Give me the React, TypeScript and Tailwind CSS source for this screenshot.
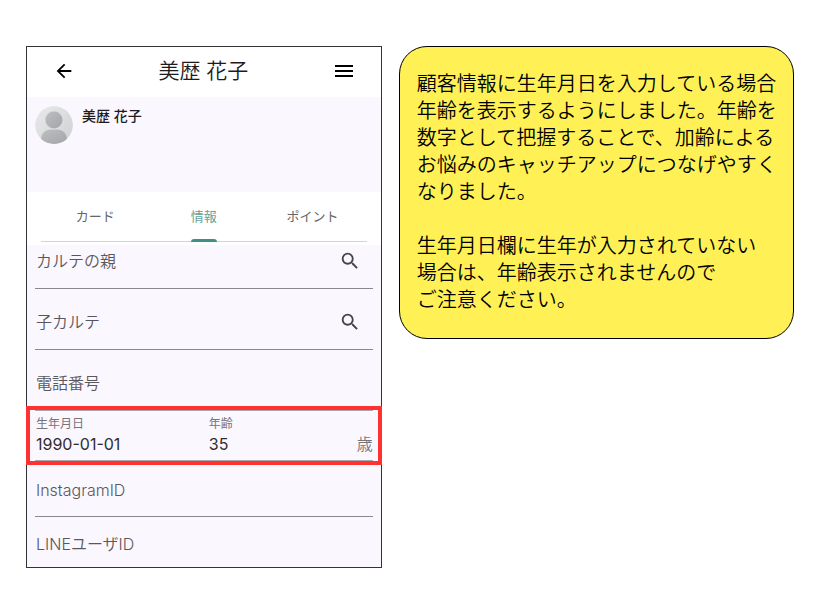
import * as React from "react"
import { useState } from "react"
import { clsx } from "clsx"
import { MdArrowBack, MdMenu, MdSearch } from "react-icons/md"

const TABS = ["カード", "情報", "ポイント"]

function Avatar() {
  return (
    <svg viewBox="0 0 38 38" className="size-[38px] shrink-0" aria-hidden="true">
      <defs>
        <clipPath id="avatar-clip">
          <circle cx="19" cy="19" r="19" />
        </clipPath>
        <linearGradient id="avatar-bg" x1="0" y1="0" x2="1" y2="1">
          <stop offset="0" stopColor="#e9eaec" />
          <stop offset="1" stopColor="#cfd0d2" />
        </linearGradient>
        <linearGradient id="avatar-fg" x1="0" y1="0" x2="1" y2="1">
          <stop offset="0" stopColor="#bcbec0" />
          <stop offset="1" stopColor="#a3a5a8" />
        </linearGradient>
      </defs>
      <g clipPath="url(#avatar-clip)">
        <circle cx="19" cy="19" r="19" fill="url(#avatar-bg)" />
        <path d="M6 38v-4c0-6.500 4.500-10.500 10-10.500h6c5.500 0 10 4 10 10.500v4z" fill="url(#avatar-fg)" />
        <circle cx="19" cy="14" r="9.500" fill="#dcdddf" />
        <circle cx="19" cy="14" r="8.500" fill="url(#avatar-fg)" />
      </g>
    </svg>
  )
}

interface FieldProps {
  id: string
  label: string
  search?: boolean
  className?: string
}

function Field({ id, label, search, className }: FieldProps) {
  return (
    <div className={clsx("mx-2 flex items-end border-[#8a878c]", className)}>
      <label htmlFor={id} className="px-px text-base leading-6 font-[350] text-[#5a575c]">{label}</label>
      <input
        id={id}
        type="text"
        className="h-6 min-w-0 flex-1 pl-2 text-base leading-6 text-[#2f2d31] outline-none"
      />
      {search && (
        <button type="button" aria-label={`${label}を検索`} className="mr-3 flex h-6 items-center text-[#464348]">
          <MdSearch size={22} />
        </button>
      )}
    </div>
  )
}

function BirthdayRow() {
  return (
    <div className="-mx-px border-4 border-[#ff3131] px-[5px]">
      <div className="grid grid-cols-2 border-y border-[#a9a6ab] pt-1 pb-[5px]">
        <div className="flex min-w-0 flex-col px-px">
          <label htmlFor="birthday" className="text-xs leading-[18px] text-[#77747a]">生年月日</label>
          <input
            id="birthday"
            type="text"
            defaultValue="1990-01-01"
            className="h-[22px] w-full text-base leading-[22px] text-[#2f2d31] outline-none"
          />
        </div>
        <div className="flex min-w-0 items-end justify-between pl-[5px]">
          <div className="flex min-w-0 flex-1 flex-col">
            <label htmlFor="age" className="text-xs leading-[18px] text-[#77747a]">年齢</label>
            <input
              id="age"
              type="text"
              readOnly
              value="35"
              className="h-[22px] w-full text-base leading-[22px] text-[#2f2d31] outline-none"
            />
          </div>
          <span className="text-base leading-[22px] font-[350] text-[#77747a]">歳</span>
        </div>
      </div>
    </div>
  )
}

function Phone() {
  const [tab, setTab] = useState("情報")

  return (
    <section className="min-w-0 border border-[#333] bg-[#fbf7fe] font-['Inter','Noto_Sans_CJK_JP',sans-serif]">
      <header className="flex h-[50px] items-center justify-between bg-white pr-[25px] pb-[3px] pl-[26px] text-black">
        <button type="button" aria-label="戻る">
          <MdArrowBack size={22} />
        </button>
        <h1 className="text-[21px] leading-8 font-[350] text-[#1c1b1f]">美歴 花子</h1>
        <button type="button" aria-label="メニュー">
          <MdMenu size={24} />
        </button>
      </header>

      <div className="flex h-[95px] gap-[9px] px-2 pt-[9px]">
        <Avatar />
        <p className="text-sm leading-5 font-medium text-[#1c1b1f]">美歴 花子</p>
      </div>

      <div className="bg-white px-3.5 pb-[3px]">
        <div role="tablist" className="grid grid-cols-3 border-b border-[#d4d3d5]">
          {TABS.map((name) => (
            <button
              key={name}
              type="button"
              role="tab"
              aria-selected={tab === name}
              onClick={() => setTab(name)}
              className={clsx(
                "relative h-[49px] text-[13px]",
                tab === name ? "text-[#5fa298]" : "text-[#666]"
              )}
            >
              {name}
              {tab === name && (
                <span className="absolute -bottom-px left-1/2 h-[3px] w-[26px] -translate-x-1/2 rounded-t-sm bg-[#3f9184]" />
              )}
            </button>
          ))}
        </div>
      </div>

      <form>
        <Field id="parent" label="カルテの親" search className="h-11 border-b pb-[15px]" />
        <Field id="child" label="子カルテ" search className="h-[61px] border-b pb-[15px]" />
        <Field id="tel" label="電話番号" className="h-[56px] pb-[11px]" />
        <BirthdayRow />
        <Field id="instagram" label="InstagramID" className="h-[52px] border-b pb-[14px]" />
        <Field id="line" label="LINEユーザID" className="h-[50px] pb-[11px]" />
      </form>
    </section>
  )
}

function Note() {
  return (
    <aside className="self-start rounded-[28px] border border-black bg-[#fff155] pt-[22px] pb-[26px] pl-[17px] font-['Noto_Sans_CJK_JP',sans-serif] text-[20px] leading-[27px] font-[350] whitespace-nowrap text-black">
      <p>
        顧客情報に生年月日を入力している場合<br />
        年齢を表示するようにしました。年齢を<br />
        数字として把握することで、加齢による<br />
        お悩みのキャッチアップにつなげやすく<br />
        なりました。
      </p>
      <p className="mt-[27px]">
        生年月日欄に生年が入力されていない<br />
        場合は、年齢表示されませんので<br />
        ご注意ください。
      </p>
    </aside>
  )
}

export default function App() {
  return (
    <main className="grid min-h-screen grid-cols-[9fr_10fr] items-start gap-[17px] bg-white pt-[46px] pr-[25px] pb-[46px] pl-[26px]">
      <Phone />
      <Note />
    </main>
  )
}
